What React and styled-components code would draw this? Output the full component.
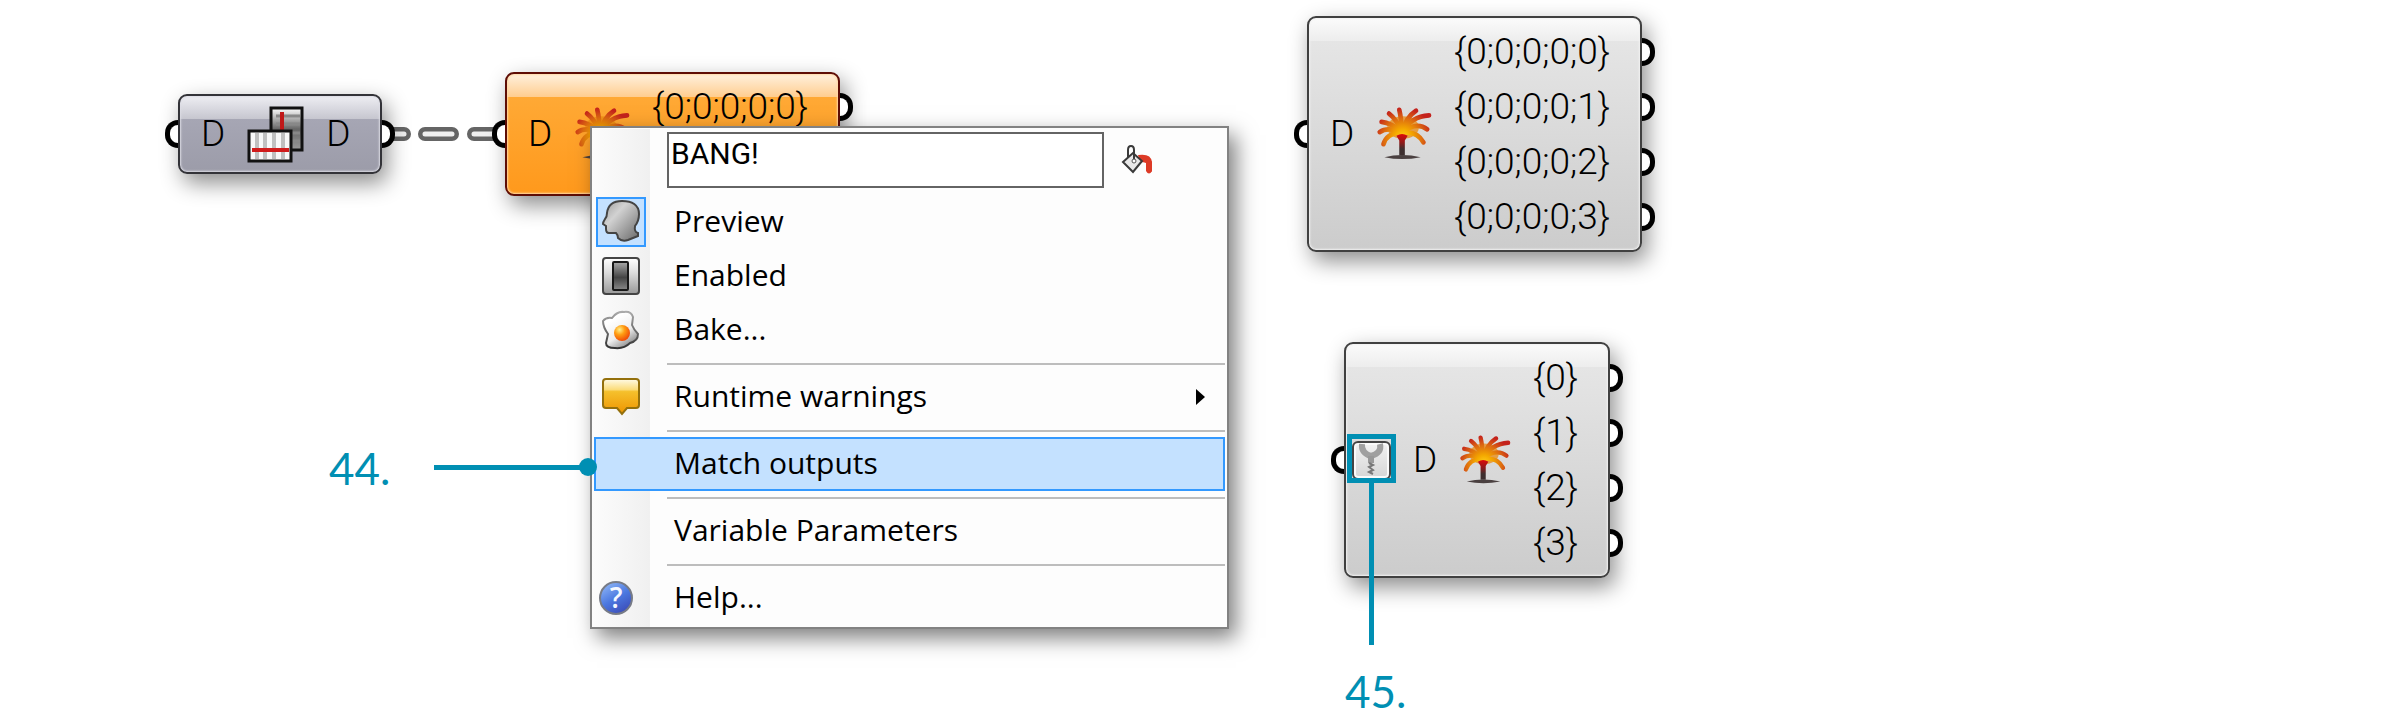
import React from "react";
import styled, { createGlobalStyle, css } from "styled-components";

const GlobalStyle = createGlobalStyle`
  *, *::before, *::after { box-sizing: border-box; }
  body { margin: 0; background: #fff; }
  button, input { font: inherit; color: inherit; margin: 0; }
`;

const accent = "#008fb3";

const skins = {
  steel: {
    border: "#333338",
    gloss: "#eeeef3, #c6c6cf 23px",
    base: "#a6a6b4 23px, #9c9ca9",
    edge: "#dcdce4",
  },
  orange: {
    border: "#5e0d05",
    gloss: "#fff1de, #ffcd8f 23px",
    base: "#ffa935 23px, #ff991c",
    edge: "#ffd9a8",
  },
  grey: {
    border: "#404040",
    gloss: "#fbfbfb, #ededed 23px",
    base: "#e5e5e5 23px, #cccccc",
    edge: "#f2f2f2",
  },
};

const Canvas = styled.main`
  position: relative;
  width: 100%;
  min-height: 100vh;
  overflow: hidden;
  background: #fff;
  font-family: Roboto, "Liberation Sans", sans-serif;
`;

const placed = css`
  position: absolute;
  left: ${(p) => p.$x}px;
  top: ${(p) => p.$y}px;
`;

const NodeBody = styled.section`
  ${placed}
  display: flex;
  align-items: center;
  gap: 22px;
  width: ${(p) => p.$w}px;
  height: ${(p) => p.$h}px;
  padding-left: ${(p) => (p.$badge ? 6 : 21)}px;
  border: 2px solid ${(p) => skins[p.$skin].border};
  border-radius: 9px;
  background: linear-gradient(${(p) => skins[p.$skin].gloss}, ${(p) => skins[p.$skin].base});
  box-shadow: inset 0 0 2px 1px ${(p) => skins[p.$skin].edge}, 5px 9px 22px rgba(0, 0, 0, 0.45);
  font-size: 37px;
  line-height: 44px;
  font-weight: 300;
  color: #000;
`;

const Port = styled.i`
  position: absolute;
  top: 50%;
  width: 13px;
  height: 28px;
  margin: -14px 2px 0;
  border: 5px solid #000;
  background: #fff;
  ${(p) =>
    p.$side === "in"
      ? css`
          right: 100%;
          border-right: 0;
          border-radius: 14px 0 0 14px;
        `
      : css`
          left: 100%;
          border-left: 0;
          border-radius: 0 14px 14px 0;
        `}
`;

const Outputs = styled.ul`
  display: flex;
  flex-direction: column;
  flex: 1;
  align-self: stretch;
  margin: 0;
  padding: 6px 0 5px;
  list-style: none;
`;

const Output = styled.li`
  position: relative;
  display: flex;
  flex: 1;
  align-items: center;
  justify-content: flex-end;
  padding-right: 30px;
`;

const Badge = styled.span`
  display: flex;
  align-items: center;
  justify-content: center;
  width: 39px;
  height: 39px;
  border: 2px solid #444;
  border-radius: 6px;
  background: linear-gradient(#f2f2f2, #d6d6d6);
  box-shadow: inset 0 0 0 2px #fafafa;
`;

const WireDrawing = styled.svg`
  ${placed}
`;

const MenuPanel = styled.div`
  ${placed}
  width: 639px;
  padding: 0 2px 2px;
  border: 2px solid #828282;
  background: linear-gradient(90deg, #fcfcfc, #f0f0f0) 0 1px / 58px 100% no-repeat #fdfdfd;
  box-shadow: 7px 9px 20px rgba(0, 0, 0, 0.5);
  font-family: "Open Sans", "Noto Sans", sans-serif;
  font-size: 30px;
  color: #000;
`;

const MenuHeader = styled.div`
  display: flex;
  align-items: flex-start;
  gap: 16px;
  height: 67px;
  padding: 4px 0 0 73px;
`;

const NameInput = styled.input`
  width: 437px;
  height: 56px;
  padding: 0 2px 14px;
  border: 2px solid #646464;
  border-radius: 0;
  background: #fff;
  font-family: Roboto, sans-serif;
  font-size: 30px;
  outline: none;
`;

const IconButton = styled.button`
  display: flex;
  padding: 13px 0 0;
  border: 0;
  background: none;
`;

const Item = styled.button`
  display: flex;
  align-items: center;
  width: 100%;
  height: 54px;
  padding: 0 20px 0 2px;
  border: 0;
  background: none;
  text-align: left;
  line-height: 54px;
  ${(p) =>
    p.$active &&
    css`
      background: #c4e1ff;
      box-shadow: inset 0 0 0 2px #3399ff;
    `}
`;

const IconSlot = styled.span`
  display: flex;
  width: 50px;
  height: 50px;
  ${(p) =>
    p.$checked &&
    css`
      background: #c4e1ff;
      box-shadow: inset 0 0 0 2px #3399ff;
    `}
`;

const ItemText = styled.span`
  flex: 1;
  height: 54px;
  padding-left: 28px;
  line-height: 52px;
`;

const Separator = styled.hr`
  height: 2px;
  margin: 6px 0 5px 73px;
  border: 0;
  background: #bdbdbd;
`;

const CalloutText = styled.span`
  ${placed}
  font-family: Lato, sans-serif;
  font-size: 44px;
  line-height: 52px;
  color: ${accent};
`;

const Leader = styled.span`
  ${placed}
  width: ${(p) => p.$w}px;
  height: ${(p) => p.$h}px;
  background: ${accent};
`;

const LeaderDot = styled.span`
  position: absolute;
  right: -9px;
  top: -7px;
  width: 18px;
  height: 18px;
  border-radius: 50%;
  background: ${accent};
`;

const Highlight = styled.span`
  ${placed}
  width: 49px;
  height: 49px;
  border: 5px solid ${accent};
`;

const fronds = [
  "M28 28Q27 12 25 4",
  "M28 28Q22 14 14 8",
  "M28 28Q16 18 6 17",
  "M28 28Q12 22 4 28",
  "M28 29Q12 28 8 41",
  "M28 28Q32 12 43 5",
  "M28 28Q38 11 57 10",
  "M28 28Q44 16 55 25",
  "M28 29Q44 26 51 39",
];

function TreeIcon() {
  return (
    <svg width="60" height="60" viewBox="0 0 60 60" fill="none" aria-hidden="true">
      <defs>
        <radialGradient id="leaf" gradientUnits="userSpaceOnUse" cx="29" cy="34" r="32">
          <stop offset="0" stopColor="#ffd21a" />
          <stop offset="0.3" stopColor="#f4a800" />
          <stop offset="0.65" stopColor="#dd6c10" />
          <stop offset="1" stopColor="#c4221c" />
        </radialGradient>
        <linearGradient id="trunk" x1="0" y1="0" x2="0" y2="1">
          <stop offset="0" stopColor="#dd0a0a" />
          <stop offset="0.4" stopColor="#8f1a1a" />
          <stop offset="0.7" stopColor="#3d2f2f" />
        </linearGradient>
      </defs>
      <ellipse cx="29" cy="23" rx="17" ry="12" fill="#e88a10" opacity="0.75" />
      {fronds.map((d) => (
        <path key={d} d={d} stroke="url(#leaf)" strokeWidth="5" strokeLinecap="round" />
      ))}
      <path d="M22 32Q28 28 34 32L31 37V53H25V37Z" fill="url(#trunk)" />
      <path d="M9 55Q28 50 48 55Q28 59 9 55Z" fill="#4a4040" />
    </svg>
  );
}

function FlipIcon() {
  return (
    <svg width="57" height="57" viewBox="0 0 57 57" fill="none" aria-hidden="true">
      <defs>
        <linearGradient id="sheet" x1="0" y1="0" x2="0" y2="1">
          <stop offset="0" stopColor="#fff" />
          <stop offset="0.5" stopColor="#666" />
          <stop offset="1" stopColor="#999" />
        </linearGradient>
      </defs>
      <rect x="24" y="2" width="31" height="42" fill="url(#sheet)" stroke="#111" strokeWidth="3" />
      <path d="M29 10H53M29 18H53M45 27H53M45 35H53" stroke="#888" strokeWidth="3" />
      <path d="M35 6V24" stroke="#c01818" strokeWidth="4" />
      <rect x="2" y="25" width="42" height="30" fill="#f8f8f8" stroke="#111" strokeWidth="3" />
      <path d="M10 27V53M18 27V53M27 27V53M36 27V53" stroke="#c0c0c0" strokeWidth="4" />
      <path d="M5 44H42" stroke="#d01c1c" strokeWidth="4" />
    </svg>
  );
}

function ZipIcon() {
  return (
    <svg width="35" height="35" viewBox="0 0 35 35" fill="none" aria-hidden="true">
      <path d="M8 1Q7 10 17 13Q28 10 26 1" stroke="#a0a0a0" strokeWidth="6" />
      <path d="M17 13V20" stroke="#999" strokeWidth="6" />
      <path d="M15 20L19 22L15 24L19 27L15 29L19 31" stroke="#777" strokeWidth="2" />
    </svg>
  );
}

function BucketIcon() {
  return (
    <svg width="34" height="32" viewBox="0 0 34 32" fill="none" aria-hidden="true">
      <path d="M20 12L27 13L31 16V27" stroke="#e0452c" strokeWidth="1" />
      <path d="M18 10Q31 8 32 17V26Q29 31 26 26V18Q24 17 20 17Z" fill="#dd3a26" />
      <path d="M3 17L13 8L22 16L13 27Z" fill="#e8e8e8" stroke="#3a3a3a" strokeWidth="2" />
      <path d="M8 13V5Q8 1 11 1Q14 1 14 5V15" stroke="#3a3a3a" strokeWidth="2" />
      <circle cx="14" cy="16" r="2" fill="#fff" stroke="#555" />
    </svg>
  );
}

const menuIcons = {
  head: (
    <>
      <defs>
        <linearGradient id="head" x1="0" y1="0" x2="1" y2="1">
          <stop offset="0" stopColor="#999" />
          <stop offset="0.35" stopColor="#d2d2d2" />
          <stop offset="1" stopColor="#686868" />
        </linearGradient>
      </defs>
      <path
        d="M26 4C17 4 12 8 11 16Q11 20 9 22Q7 25 7 27L10 29L10 32Q10 36 13 36L20 36Q22 38 22 41Q26 45 32 43L42 39L42 36Q38 35 39 29Q43 24 43 17C43 8 36 4 26 4Z"
        fill="url(#head)"
        stroke="#444"
        strokeWidth="2"
      />
    </>
  ),
  toggle: (
    <>
      <defs>
        <linearGradient id="plate" x1="0" y1="0" x2="0" y2="1">
          <stop offset="0" stopColor="#fff" />
          <stop offset="0.4" stopColor="#ddd" />
          <stop offset="1" stopColor="#999" />
        </linearGradient>
        <linearGradient id="lever" x1="0" y1="0" x2="0" y2="1">
          <stop offset="0" stopColor="#aaa" />
          <stop offset="0.55" stopColor="#444" />
          <stop offset="1" stopColor="#888" />
        </linearGradient>
      </defs>
      <rect x="7" y="7" width="36" height="36" rx="3" fill="url(#plate)" stroke="#444" strokeWidth="2" />
      <rect x="17" y="11" width="15" height="28" rx="1" fill="url(#lever)" stroke="#181818" strokeWidth="2" />
    </>
  ),
  egg: (
    <>
      <defs>
        <linearGradient id="white" x1="0.3" y1="0.2" x2="0.8" y2="1">
          <stop offset="0" stopColor="#fff" />
          <stop offset="0.5" stopColor="#eee" />
          <stop offset="1" stopColor="#777" />
        </linearGradient>
        <radialGradient id="yolk" cx="0.35" cy="0.3" r="0.7">
          <stop offset="0" stopColor="#fff08a" />
          <stop offset="0.45" stopColor="#ff9d12" />
          <stop offset="1" stopColor="#f04e08" />
        </radialGradient>
        <linearGradient id="rim" x1="0" y1="0" x2="0" y2="1">
          <stop offset="0" stopColor="#aaa" />
          <stop offset="1" stopColor="#333" />
        </linearGradient>
      </defs>
      <path
        d="M7 16Q10 12 16 13Q21 6 28 7Q35 6 37 12L36 20Q38 25 42 29Q42 36 34 38Q28 44 19 43Q10 43 10 38L12 29Q7 22 7 16Z"
        fill="url(#white)"
        stroke="url(#rim)"
        strokeWidth="2"
      />
      <circle cx="26" cy="28" r="8" fill="url(#yolk)" />
    </>
  ),
  warning: (
    <>
      <defs>
        <linearGradient id="amber" x1="0" y1="0" x2="0" y2="1">
          <stop offset="0" stopColor="#fffbe8" />
          <stop offset="0.3" stopColor="#fbdc7a" />
          <stop offset="0.36" stopColor="#f5c02c" />
          <stop offset="1" stopColor="#ee9400" />
        </linearGradient>
      </defs>
      <path
        d="M10 7H40Q43 7 43 10V33Q43 36 40 36H31L26 42L21 36H10Q7 36 7 33V10Q7 7 10 7Z"
        fill="url(#amber)"
        stroke="#94700c"
        strokeWidth="2"
      />
    </>
  ),
  help: (
    <>
      <defs>
        <linearGradient id="orb" x1="0.2" y1="0" x2="0.8" y2="1">
          <stop offset="0" stopColor="#8fb6f6" />
          <stop offset="0.5" stopColor="#4b78e0" />
          <stop offset="1" stopColor="#3a48b4" />
        </linearGradient>
      </defs>
      <circle cx="20" cy="25" r="16" fill="url(#orb)" stroke="#777b86" strokeWidth="2" />
      <text x="20" y="35" textAnchor="middle" fontFamily="Open Sans, sans-serif" fontWeight="600" fontSize="28" fill="#f4f7ff">
        ?
      </text>
    </>
  ),
};

function GraphNode({ x, y, w, h, skin, badge, icon, output, outputs }) {
  return (
    <NodeBody $x={x} $y={y} $w={w} $h={h} $skin={skin} $badge={badge}>
      <Port $side="in" />
      {badge && (
        <Badge>
          <ZipIcon />
        </Badge>
      )}
      <span>D</span>
      {icon}
      {output && (
        <>
          <span>{output}</span>
          <Port $side="out" />
        </>
      )}
      {outputs && (
        <Outputs>
          {outputs.map((name, i) => (
            <Output key={i}>
              {name}
              {name && <Port $side="out" />}
            </Output>
          ))}
        </Outputs>
      )}
    </NodeBody>
  );
}

function MenuItem({ icon, checked, active, submenu, children }) {
  return (
    <Item type="button" role="menuitem" $active={active}>
      <IconSlot $checked={checked}>
        {icon && (
          <svg width="50" height="50" viewBox="0 0 50 50" fill="none" aria-hidden="true">
            {menuIcons[icon]}
          </svg>
        )}
      </IconSlot>
      <ItemText>{children}</ItemText>
      {submenu && (
        <svg width="9" height="16" viewBox="0 0 9 16" aria-hidden="true">
          <path d="M0 0L9 8L0 16Z" fill="#000" />
        </svg>
      )}
    </Item>
  );
}

function Wire() {
  const dashes = "M0 8H20M41 8H68M90 8H130";
  return (
    <WireDrawing $x={384} $y={126} width="130" height="16" viewBox="0 0 130 16" fill="none" aria-hidden="true">
      <path d={dashes} stroke="#656565" strokeWidth="14" strokeLinecap="round" />
      <path d={dashes} stroke="#efefef" strokeWidth="5" strokeLinecap="round" />
    </WireDrawing>
  );
}

export default function App() {
  return (
    <>
      <GlobalStyle />
      <Canvas>
        <Wire />
        <GraphNode x={178} y={94} w={204} h={80} skin="steel" icon={<FlipIcon />} output="D" />
        <GraphNode x={505} y={72} w={335} h={124} skin="orange" icon={<TreeIcon />} outputs={["{0;0;0;0;0}", ""]} />
        <GraphNode
          x={1307}
          y={16}
          w={335}
          h={236}
          skin="grey"
          icon={<TreeIcon />}
          outputs={["{0;0;0;0;0}", "{0;0;0;0;1}", "{0;0;0;0;2}", "{0;0;0;0;3}"]}
        />
        <GraphNode
          x={1344}
          y={342}
          w={266}
          h={236}
          skin="grey"
          badge
          icon={<TreeIcon />}
          outputs={["{0}", "{1}", "{2}", "{3}"]}
        />

        <MenuPanel $x={590} $y={126} role="menu">
          <MenuHeader>
            <NameInput aria-label="Component name" defaultValue="BANG!" />
            <IconButton type="button" aria-label="Fill colour">
              <BucketIcon />
            </IconButton>
          </MenuHeader>
          <MenuItem icon="head" checked>Preview</MenuItem>
          <MenuItem icon="toggle">Enabled</MenuItem>
          <MenuItem icon="egg">Bake...</MenuItem>
          <Separator />
          <MenuItem icon="warning" submenu>Runtime warnings</MenuItem>
          <Separator />
          <MenuItem active>Match outputs</MenuItem>
          <Separator />
          <MenuItem>Variable Parameters</MenuItem>
          <Separator />
          <MenuItem icon="help">Help...</MenuItem>
        </MenuPanel>

        <CalloutText $x={329} $y={442}>44.</CalloutText>
        <Leader $x={434} $y={465} $w={154} $h={5}>
          <LeaderDot />
        </Leader>

        <Highlight $x={1347} $y={434} />
        <Leader $x={1369} $y={482} $w={5} $h={163} />
        <CalloutText $x={1345} $y={665}>45.</CalloutText>
      </Canvas>
    </>
  );
}
